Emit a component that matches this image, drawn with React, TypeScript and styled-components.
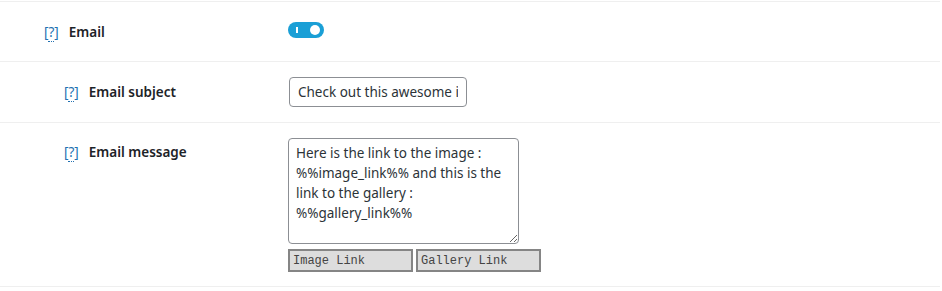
import React from 'react'
import styled, { createGlobalStyle } from 'styled-components'

const GlobalStyle = createGlobalStyle`
  body {
    margin: 0;
    background: #fff;
    font-family: 'Noto Sans', 'Open Sans', sans-serif;
    color: #1d2327;
  }
`

const Table = styled.div`
  width: 940px;
  padding-top: 1px;
  border-bottom: 1px solid #efefef;
`

const Row = styled.div<{ $height?: number; $pad?: string }>`
  display: grid;
  grid-template-columns: 288px 1fr;
  align-items: ${p => (p.$height ? 'center' : 'start')};
  height: ${p => (p.$height ? `${p.$height}px` : 'auto')};
  padding: ${p => p.$pad || '0'};
  border-top: 1px solid #efefef;
`

const Label = styled.div<{ $indent?: boolean; $top?: number }>`
  display: flex;
  align-items: center;
  gap: 10px;
  padding-left: ${p => (p.$indent ? 64 : 44)}px;
  margin-top: ${p => p.$top || 0}px;
  font-size: 13.5px;
  line-height: 20px;
  font-weight: 600;
`

const Help = styled.a`
  color: #2271b1;
  font-weight: 400;
  text-decoration: none;
  cursor: help;

  span {
    border-bottom: 1px dotted #2271b1;
  }
`

const Toggle = styled.span`
  position: relative;
  display: inline-block;
  width: 36px;
  height: 16px;
  border-radius: 8px;
  background: #1a9fd6;

  &::before {
    content: '';
    position: absolute;
    left: 8px;
    top: 5px;
    width: 2px;
    height: 6px;
    background: #fff;
  }

  &::after {
    content: '';
    position: absolute;
    right: 4px;
    top: 3px;
    width: 10px;
    height: 10px;
    border-radius: 50%;
    background: #fff;
  }
`

const TextInput = styled.input`
  box-sizing: border-box;
  width: 178px;
  height: 30px;
  margin-left: 1px;
  padding: 0 8px;
  border: 1px solid #8c8f94;
  border-radius: 4px;
  font-family: 'Noto Sans', 'Open Sans', sans-serif;
  font-size: 13.5px;
  color: #2c3338;
  outline: none;
`

const Control = styled.div`
  display: flex;
  flex-direction: column;
  align-items: flex-start;
  gap: 5px;
`

const TextArea = styled.textarea`
  box-sizing: border-box;
  width: 231px;
  height: 106px;
  margin: 0;
  padding: 4px 7px;
  border: 1px solid #8c8f94;
  border-radius: 4px;
  font-family: 'Noto Sans', 'Open Sans', sans-serif;
  font-size: 13.5px;
  line-height: 20px;
  color: #2c3338;
  outline: none;
`

const Buttons = styled.div`
  display: flex;
  gap: 3px;
`

const TagButton = styled.button`
  box-sizing: border-box;
  width: 125px;
  height: 23px;
  padding: 0 3px;
  text-align: left;
  background: #dddddd;
  border: 2px solid #858585;
  font-family: 'Liberation Mono', monospace;
  font-size: 12px;
  color: #444;
`

const App = () => {
  return (
    <>
      <GlobalStyle />
      <Table>
        <Row $height={59}>
          <Label>
            <Help>[<span>?</span>]</Help>
            Email
          </Label>
          <div>
            <Toggle />
          </div>
        </Row>
        <Row $height={60}>
          <Label $indent>
            <Help>[<span>?</span>]</Help>
            Email subject
          </Label>
          <div>
            <TextInput defaultValue="Check out this awesome image !" />
          </div>
        </Row>
        <Row $pad="15px 0 14px">
          <Label $indent $top={4}>
            <Help>[<span>?</span>]</Help>
            Email message
          </Label>
          <Control>
            <TextArea defaultValue={'Here is the link to the image : %%image_link%% and this is the link to the gallery : %%gallery_link%%'} />
            <Buttons>
              <TagButton>Image Link</TagButton>
              <TagButton>Gallery Link</TagButton>
            </Buttons>
          </Control>
        </Row>
      </Table>
    </>
  )
}

export default App
